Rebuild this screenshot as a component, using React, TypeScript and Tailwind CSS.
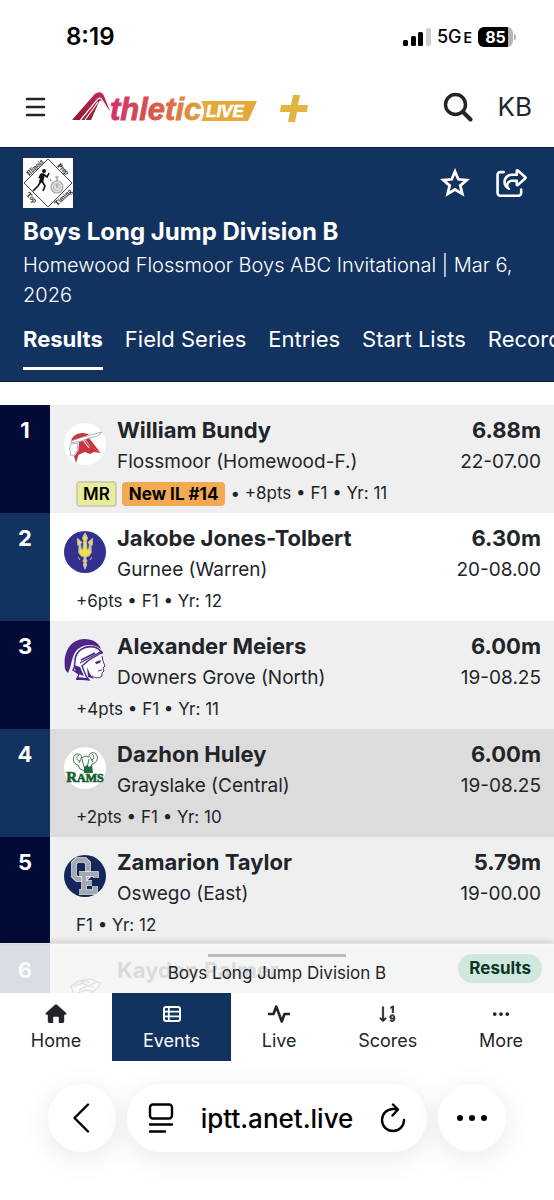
import React from 'react';
import { BsActivity, BsSortNumericDown, BsThreeDots } from 'react-icons/bs';
import { FaRegShareFromSquare } from 'react-icons/fa6';

interface Result {
  place: number;
  name: string;
  team: string;
  mark: string;
  imperial: string;
  details: string;
  badges?: boolean;
  logo: React.ReactNode;
  rowClass: string;
}

const VikingLogo = () => (
  <svg viewBox="0 0 42 42" className="w-full h-full" aria-hidden="true">
    <circle cx="21" cy="21" r="21" fill="#fff" />
    <path d="M7 18c1-5 6-8 12-8l6 1-4 3-14 5z" fill="#c8363d" />
    <path d="M15 19l6-2 5 6 11 7-7-1-4 2-5-2-7 3z" fill="#c8363d" />
    <path d="M21 16l4-1 11 14-9-5z" fill="#c8363d" />
    <path d="M10 33c2-1 3-3 4-6l1 3-2 7-1 3z" fill="#c8363d" />
    <path d="M7 18l12-4 19-5c-3 4-8 5-13 6l-8 3-10 2z" fill="#fff" stroke="#a5a5a8" strokeWidth=".9" strokeLinejoin="round" />
    <path d="M7 21l-2 6 2 1-1 4 4 1 3-5 1-8z" fill="#fff" stroke="#a5a5a8" strokeWidth=".8" strokeLinejoin="round" />
    <path d="M19 17l6 8" fill="none" stroke="#e6e6e6" strokeWidth="1.2" />
  </svg>
);

const TridentLogo = () => (
  <svg viewBox="0 0 42 42" className="w-full h-full" aria-hidden="true">
    <circle cx="21" cy="21" r="21" fill="#33308f" />
    <path
      d="M21 2l2.500 5-1.200 3 .8 9 1.700-1 .6-5-1.200-1.500 4.400-4-.4 6.500-1.300.5.300 7-2.400 3.500-2.600.5-.4 2.500 1.200 2-1.100 1 .6 3-1.500 4-1.500-4 .6-3-1.100-1 1.200-2-.4-2.500-2.600-.5-2.400-3.500.3-7-1.300-.5-.4-6.500 4.400 4-1.200 1.500.6 5 1.700 1 .8-9L18.500 7z"
      fill="#f2e23a"
      stroke="#b9b7c4"
      strokeWidth="1.1"
      strokeLinejoin="round"
    />
    <path d="M14 26l2 3M28 26l-2 3" stroke="#b9b7c4" strokeWidth="1" />
  </svg>
);

const TrojanLogo = () => (
  <svg viewBox="0 0 42 42" className="w-full h-full" aria-hidden="true">
    <path d="M12 12c6-7 20-6 25 4l4 6-1 12-5 6-19 1-5-8z" fill="#fff" />
    <path d="M1 30C-1 14 5 1 20 0c9 0 15 4 17 10C28 3 13 5 9 18c-2 5-2 10-5 16-1-1-2-2-3-4z" fill="#4c2786" />
    <path d="M11 21c1-9 9-15 19-13 4 1 7 4 8 7" fill="none" stroke="#4c2786" strokeWidth="1.6" />
    <path d="M11 21c0 4 0 7-2 10l6 4-2 5 12 1-3-4-4-10 7-6 14-8M16 24l22-12M17 21l14-7" fill="none" stroke="#4c2786" strokeWidth="1.4" />
    <path d="M10 26l6 2 4 9-8-3zM13 38l10 1 1 2H12zM23 28l3 7 4 5-6-2zM31 23l6-2-1 3-4 1z" fill="#4c2786" />
    <path d="M38 17l1 5 2 5-2 2 1 3-2 2v3c-3 3-7 2-10 0M34 32l4-1" fill="none" stroke="#4c2786" strokeWidth="1" />
  </svg>
);

const RamsLogo = () => (
  <svg viewBox="0 0 42 42" className="w-full h-full" aria-hidden="true">
    <circle cx="21" cy="21" r="21" fill="#fff" />
    <path d="M14 18c-5-1-6-7-3-10 3-2 7-1 7 3l3-2 4 1c0-4 4-6 7-3 3 4 1 9-4 10l-1 4-6 3-5-2z" fill="#fff" stroke="#3d7a4e" strokeWidth="1" />
    <path d="M15 8c-3 1-3 6 1 6M28 7c3 2 2 6-1 6M18 12l2 8M25 12l-2 9M18 10l-3 6M26 10l3 5" fill="none" stroke="#3d7a4e" strokeWidth="1" />
    <path d="M20 20l3-2 2 2 3-2 1 8h-9z" fill="#26693a" />
    <text x="21" y="35" textAnchor="middle" fill="#17612f" stroke="#17612f" strokeWidth=".7" fontFamily="Liberation Serif, serif" fontWeight="700" fontSize="12">
      <tspan fontSize="15">R</tspan>AMS
    </text>
  </svg>
);

const OswegoLogo = () => (
  <svg viewBox="0 0 42 42" className="w-full h-full" aria-hidden="true">
    <circle cx="21" cy="21" r="21" fill="#14275a" />
    <g fill="none" strokeLinejoin="miter">
      <path d="M13 5h8l3 3v13l-3 3h-8l-3-3V8z" stroke="#f4f4f4" strokeWidth="5.500" />
      <path d="M13 5h8l3 3v13l-3 3h-8l-3-3V8z" stroke="#a4a8b0" strokeWidth="4" />
      <path d="M32 23v-4H15M20 19v18M15 37h16v-6M20 28h8" stroke="#f4f4f4" strokeWidth="5.500" />
      <path d="M32 23v-4H15M20 19v18M15 37h16v-6M20 28h8" stroke="#a4a8b0" strokeWidth="4" />
    </g>
  </svg>
);

const FalconLogo = () => (
  <svg viewBox="0 0 42 42" className="w-full h-full" aria-hidden="true">
    <path d="M7 23l8-5 12-2 9 4-3 6-10 6-12 1z" fill="#fff" stroke="#555" strokeWidth="1.500" />
    <path d="M10 23l9-3 5 3 9-4M15 27l8-4 7 1M16 19l6-1 4 2M13 30l9-3 6 1" fill="none" stroke="#555" strokeWidth="1.500" />
  </svg>
);

const results: Result[] = [
  { place: 1, name: 'William Bundy', team: 'Flossmoor (Homewood-F.)', mark: '6.88m', imperial: '22-07.00', details: '• +8pts • F1 • Yr: 11', badges: true, logo: <VikingLogo />, rowClass: 'bg-[#efefef]' },
  { place: 2, name: 'Jakobe Jones-Tolbert', team: 'Gurnee (Warren)', mark: '6.30m', imperial: '20-08.00', details: '+6pts • F1 • Yr: 12', logo: <TridentLogo />, rowClass: 'bg-white' },
  { place: 3, name: 'Alexander Meiers', team: 'Downers Grove (North)', mark: '6.00m', imperial: '19-08.25', details: '+4pts • F1 • Yr: 11', logo: <TrojanLogo />, rowClass: 'bg-[#efefef]' },
  { place: 4, name: 'Dazhon Huley', team: 'Grayslake (Central)', mark: '6.00m', imperial: '19-08.25', details: '+2pts • F1 • Yr: 10', logo: <RamsLogo />, rowClass: 'bg-[#dcdcdc]' },
  { place: 5, name: 'Zamarion Taylor', team: 'Oswego (East)', mark: '5.79m', imperial: '19-00.00', details: 'F1 • Yr: 12', logo: <OswegoLogo />, rowClass: 'bg-[#efefef]' },
  { place: 6, name: 'Kayden Palmer', team: '', mark: '', imperial: '', details: '', logo: <FalconLogo />, rowClass: 'bg-[#dcdcdc]' },
];

const tabs = ['Results', 'Field Series', 'Entries', 'Start Lists', 'Records'];

const StatusBar = () => (
  <div className="flex h-[74px] items-center justify-between pr-[38px] pl-[66px] text-black">
    <span className="text-2xl font-semibold">8:19</span>
    <div className="flex items-center">
      <svg width="28" height="18" viewBox="0 0 28 18" aria-hidden="true">
        <rect x="0" y="12" width="5" height="6" rx="1.5" />
        <rect x="8" y="8" width="5" height="10" rx="1.5" />
        <rect x="15" y="4" width="5" height="14" rx="1.5" />
        <rect x="23" y="0" width="5" height="18" rx="1.5" fill="#cfcfcf" />
      </svg>
      <span className="ml-1.5 text-lg font-medium">
        5G<span className="ml-0.5 text-sm font-semibold">E</span>
      </span>
      <div className="ml-1.5 flex items-center">
        <div className="flex h-5 w-[35px] items-center justify-center rounded-md bg-linear-to-r from-black from-85% to-[#b5b5b5] to-85% text-base font-bold text-white">
          85
        </div>
        <div className="ml-px h-1.5 w-0.5 rounded-r bg-[#b5b5b5]" />
      </div>
    </div>
  </div>
);

const Logo = () => (
  <svg width="236" height="34" viewBox="0 0 236 34" className="overflow-visible" role="img" aria-label="AthleticLIVE plus">
    <defs>
      <linearGradient id="wordmark" gradientUnits="userSpaceOnUse" x1="36" y1="0" x2="130" y2="0">
        <stop offset="0" stopColor="#cf2d6c" />
        <stop offset=".45" stopColor="#d8524e" />
        <stop offset="1" stopColor="#e2a03c" />
      </linearGradient>
      <linearGradient id="track" x1="0" y1="1" x2="1" y2="0">
        <stop offset="0" stopColor="#8c1a2c" />
        <stop offset="1" stopColor="#c92a5d" />
      </linearGradient>
    </defs>
    <path d="M0 30L21 6c4-5 9-5 11 0l6 15c-3-2-5-5-7-9-1-2-3-2-4 0L19 30z" fill="url(#track)" />
    <path d="M8.500 30L25 10c2-3 4-2 5 0l7 11M13 30L26 12" fill="none" stroke="#fff" strokeWidth="1.200" />
    <text x="38" y="30" fill="url(#wordmark)" stroke="url(#wordmark)" strokeWidth=".8" fontFamily="Liberation Sans, sans-serif" fontStyle="italic" fontWeight="700" fontSize="31">
      thletic
    </text>
    <path d="M129 11h56l-9 20h-47c4-6 4-14 0-20z" fill="#e4a93a" />
    <text x="134" y="27" fill="#fff" stroke="#fff" strokeWidth=".6" fontFamily="Liberation Sans, sans-serif" fontStyle="italic" fontWeight="700" fontSize="17">
      LIVE
    </text>
    <path d="M221 5h7l-2 10h10l-1 7h-10l-2 10h-7l2-10h-10l1-7h10z" fill="#e3b440" />
  </svg>
);

const TimingLogo = () => (
  <svg viewBox="0 0 50 50" className="h-[50px] w-[50px] bg-white" role="img" aria-label="Illinois Prep Top Timing">
    <path d="M25 1l24 24-24 24L1 25z" fill="none" stroke="#444" strokeWidth="1" />
    <g fill="#111" stroke="#111" strokeWidth=".2" fontFamily="Liberation Serif, serif" fontSize="7">
      <text transform="translate(6 18) rotate(-43)">
        <tspan fontWeight="700">I</tspan>llinois
      </text>
      <text transform="translate(34 8) rotate(45)">
        <tspan fontWeight="700">P</tspan>rep
      </text>
      <text transform="translate(3 37) rotate(45)">
        <tspan fontWeight="700">T</tspan>op
      </text>
      <text transform="translate(34 48) rotate(-43)">
        <tspan fontWeight="700">T</tspan>iming
      </text>
    </g>
    <circle cx="21" cy="13" r="2" fill="#111" />
    <path d="M20 16l4 3 2-4M18 16l-2 4M19 23l3 5-2 5M18 23l-3 5-5 5" fill="none" stroke="#111" strokeWidth="1.600" />
    <path d="M18 15l4 1-2 9-4-1z" fill="#111" />
    <circle cx="34" cy="29" r="6" fill="#e4e4e4" stroke="#a5a5a5" strokeWidth="1.200" />
    <path d="M34 23v-4M32 19h4M34 26v4M28 23l-1-2" stroke="#8d8d8d" strokeWidth="1.200" />
    <circle cx="34" cy="29" r="3.500" fill="none" stroke="#aaa" strokeWidth=".8" />
  </svg>
);

const ResultRow: React.FC<{ result: Result }> = ({ result }) => (
  <tr className={result.rowClass}>
    <th
      scope="row"
      className={`h-[108px] pt-2.5 align-top text-[22px] leading-[30px] font-bold text-white ${
        result.place % 2 ? 'bg-[#020a38]' : 'bg-[#12325f]'
      }`}
    >
      {result.place}
    </th>
    <td className="pt-2.5 pl-3.5 align-top whitespace-nowrap">
      <div className="flex gap-[11px]">
        <div className="mt-2 h-[42px] w-[42px] shrink-0">{result.logo}</div>
        <div>
          <div className="text-[22px] leading-[30px] font-bold">{result.name}</div>
          <div className="text-[19px] leading-[34px]">{result.team}</div>
        </div>
      </div>
      <div className="flex h-[30px] items-center gap-[5px] pl-3 text-[17px]">
        {result.badges && (
          <>
            <span className="rounded-sm border-2 border-[#cfcfae] bg-[#e9ec9b] px-[5px] leading-[22px] font-semibold text-black">MR</span>
            <span className="rounded-sm bg-[#f3a952] px-[7px] leading-6 font-bold text-black">New IL #14</span>
          </>
        )}
        <span>{result.details}</span>
      </div>
    </td>
    <td className="pt-2.5 pr-[13px] text-right align-top">
      <div className="text-[22px] leading-[30px] font-bold">{result.mark}</div>
      <div className="text-[19px] leading-[34px]">{result.imperial}</div>
    </td>
  </tr>
);

const NavItem: React.FC<{ label: string; active?: boolean; children: React.ReactNode }> = ({ label, active, children }) => (
  <a
    href="#"
    className={`flex flex-auto flex-col items-center gap-0.5 px-5 pt-2.5 pb-1.5 ${active ? 'bg-[#12325f] text-white' : 'text-[#212529]'}`}
  >
    <span className="flex h-[22px] items-center">{children}</span>
    <span className="text-lg leading-7">{label}</span>
  </a>
);

const App: React.FC = () => {
  return (
    <div className="flex h-screen flex-col overflow-hidden bg-white font-[Inter,sans-serif] text-[#212529]">
      <StatusBar />
      <header className="flex h-[73px] shrink-0 items-center pr-[22px] pb-2 pl-6">
        <button aria-label="Menu" className="mr-[25px]">
          <svg width="23" height="20" viewBox="0 0 23 20" fill="none" stroke="currentColor" strokeWidth="2.6" strokeLinecap="round">
            <path d="M3 2h17M3 10h17M3 18h17" />
          </svg>
        </button>
        <Logo />
        <button aria-label="Search" className="ml-auto">
          <svg width="30" height="30" viewBox="0 0 30 30" fill="none" stroke="currentColor" strokeWidth="3.4" strokeLinecap="round">
            <circle cx="12.500" cy="12.500" r="10" />
            <path d="M20 20l7.500 7.500" strokeWidth="4" />
          </svg>
        </button>
        <button className="ml-[25px] text-[26px]">KB</button>
      </header>

      <section className="shrink-0 overflow-hidden border-y border-[#0a1c3c] bg-[#12325f] pt-2.5 pb-[11px] text-white">
        <div className="flex items-center pr-[26px] pl-[23px]">
          <TimingLogo />
          <button aria-label="Favorite" className="ml-auto">
            <svg width="30" height="30" viewBox="0 0 30 30" fill="none" stroke="currentColor" strokeWidth="2.8">
              <path d="M15 3.500l3.300 7.800 8.400.8-6.400 5.500 2 8.300-7.300-4.400-7.300 4.400 2-8.300-6.400-5.500 8.400-.8z" />
            </svg>
          </button>
          <button aria-label="Share" className="ml-[26px]">
            <FaRegShareFromSquare className="h-7 w-8" />
          </button>
        </div>
        <div className="px-[23px] pt-[9px]">
          <h1 className="text-2xl leading-[30px] font-bold">Boys Long Jump Division B</h1>
          <p className="mt-[3px] text-xl leading-[30px] font-light">Homewood Flossmoor Boys ABC Invitational | Mar 6, 2026</p>
        </div>
        <nav className="mt-3.5 flex gap-[22px] pl-[23px] whitespace-nowrap">
          {tabs.map((tab, i) => (
            <a
              key={tab}
              href="#"
              className={`border-b-[3px] pb-3 text-[22px] leading-[31px] ${i === 0 ? 'border-white font-bold' : 'border-transparent'}`}
            >
              {tab}
            </a>
          ))}
        </nav>
      </section>

      <main className="relative min-h-0 flex-1 overflow-hidden pt-[23px]">
        <table className="w-full table-fixed">
          <colgroup>
            <col className="w-[50px]" />
            <col />
            <col className="w-[120px]" />
          </colgroup>
          <tbody>
            {results.map((result) => (
              <ResultRow key={result.place} result={result} />
            ))}
          </tbody>
        </table>
        <div className="absolute inset-x-0 bottom-0 flex h-[50px] flex-col items-center border-t border-[#e2e2e2] bg-[#f9f9f9]/86 pt-2.5 shadow-[0_-2px_6px_rgba(0,0,0,0.12)]">
          <div className="h-[3px] w-1/4 bg-[#b9b9b9]" />
          <div className="mt-1 text-[17px] leading-6">Boys Long Jump Division B</div>
          <span className="absolute top-2.5 right-3 rounded-full bg-[#d1e7dd] px-[11px] text-[17px] leading-[29px] font-bold text-[#0a3622]">
            Results
          </span>
        </div>
      </main>

      <nav className="flex shrink-0">
        <NavItem label="Home">
          <svg width="22" height="20" viewBox="0 0 22 20" fill="currentColor">
            <path d="M10 .8a1.5 1.5 0 0 1 2 0l9 8c.9.9.4 1.900-.5 1.900h-1.300v6.600c0 1-.7 1.700-1.700 1.700h-3.700v-5.200c0-.6-.4-1-1-1h-3.600c-.6 0-1 .4-1 1V19H4.500c-1 0-1.700-.7-1.700-1.700v-6.600H1.500C.6 10.700.1 9.700 1 8.800z" />
          </svg>
        </NavItem>
        <NavItem label="Events" active>
          <svg width="18" height="16" viewBox="0 0 18 16" fill="none" stroke="currentColor" strokeWidth="2">
            <rect x="1" y="1" width="16" height="14" rx="2" />
            <path d="M2 5.700h14M2 10.300h14M5.800 2v12" strokeWidth="1.800" />
          </svg>
        </NavItem>
        <NavItem label="Live">
          <BsActivity className="h-[22px] w-[22px]" stroke="currentColor" strokeWidth=".9" />
        </NavItem>
        <NavItem label="Scores">
          <BsSortNumericDown className="h-5 w-5" stroke="currentColor" strokeWidth=".6" />
        </NavItem>
        <NavItem label="More">
          <BsThreeDots className="h-5 w-5" />
        </NavItem>
      </nav>

      <footer className="flex shrink-0 gap-[11px] px-12 pt-[23px] pb-12 text-black">
        <button aria-label="Back" className="flex h-[68px] w-[68px] shrink-0 items-center justify-center rounded-full bg-white shadow-[0_6px_30px_rgba(0,0,0,0.09)]">
          <svg width="18" height="30" viewBox="0 0 18 30" fill="none" stroke="currentColor" strokeWidth="2.4" strokeLinecap="round" strokeLinejoin="round">
            <path d="M15 1.500L1.500 15 15 28.500" />
          </svg>
        </button>
        <div className="flex h-[68px] flex-1 items-center justify-between rounded-full bg-white px-[21px] shadow-[0_6px_30px_rgba(0,0,0,0.09)]">
          <button aria-label="Page menu">
            <svg width="26" height="30" viewBox="0 0 26 30" fill="none" stroke="currentColor" strokeWidth="2.4" strokeLinecap="round">
              <rect x="2" y="1.500" width="22" height="14" rx="3" />
              <path d="M2 21.500h22M2 28.500h15" />
            </svg>
          </button>
          <span className="text-[26px] font-medium">iptt.anet.live</span>
          <button aria-label="Reload">
            <svg width="26" height="30" viewBox="0 0 26 30" fill="none" stroke="currentColor" strokeWidth="2.4" strokeLinecap="round" strokeLinejoin="round">
              <path d="M17 6H13a11 11 0 1 0 11 11M13 1.500L18 6.500l-5.500 6" />
            </svg>
          </button>
        </div>
        <button aria-label="More options" className="flex h-[68px] w-[68px] shrink-0 items-center justify-center rounded-full bg-white shadow-[0_6px_30px_rgba(0,0,0,0.09)]">
          <svg width="32" height="8" viewBox="0 0 32 8" fill="currentColor">
            <circle cx="4" cy="4" r="3" />
            <circle cx="16" cy="4" r="3" />
            <circle cx="28" cy="4" r="3" />
          </svg>
        </button>
      </footer>
    </div>
  );
};

export default App;
